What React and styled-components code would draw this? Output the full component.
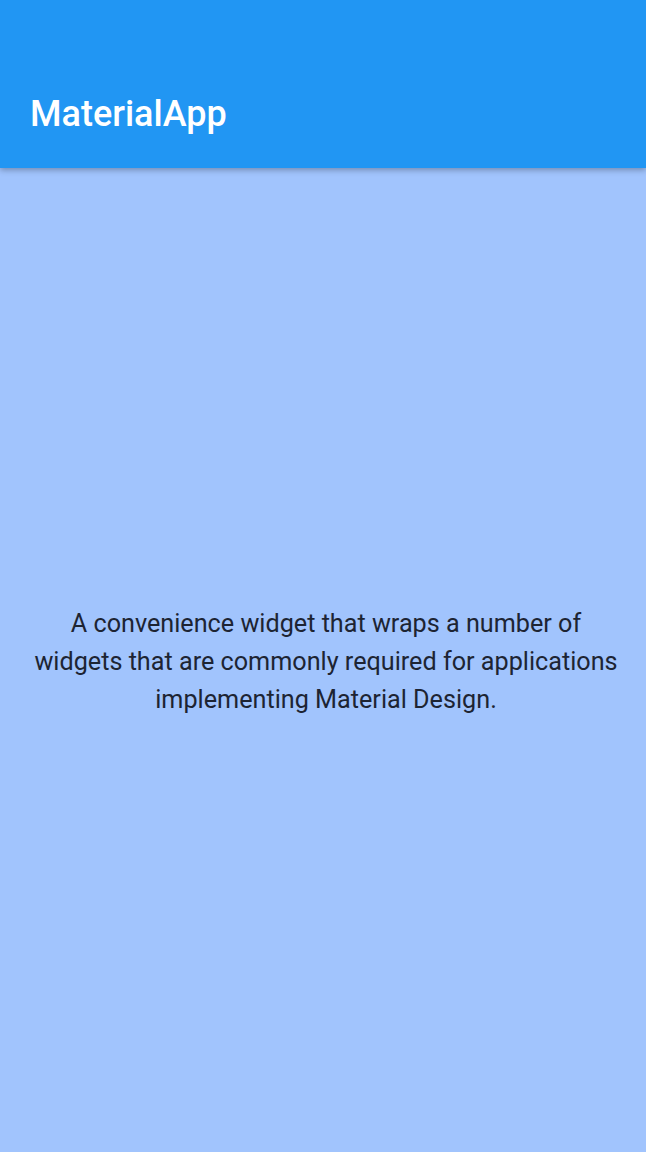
import React from 'react'
import styled, { createGlobalStyle } from 'styled-components'

const GlobalStyle = createGlobalStyle`
  html, body {
    margin: 0;
    padding: 0;
    height: 100%;
  }
  body {
    font-family: Roboto, 'Noto Sans', sans-serif;
    background: #a1c4fd;
  }
  #root {
    height: 100%;
  }
`

const Page = styled.div`
  display: flex;
  flex-direction: column;
  height: 100vh;
  background: #a1c4fd;
`

const AppBar = styled.header`
  height: 168px;
  flex-shrink: 0;
  background: #2196f3;
  display: flex;
  align-items: flex-end;
  padding: 0 30px 34px;
  box-sizing: border-box;
  box-shadow: 0 2px 6px rgba(0, 0, 0, 0.3);
  position: relative;
  z-index: 1;
`

const Title = styled.h1`
  margin: 0;
  color: #fff;
  font-size: 36px;
  font-weight: 500;
  line-height: 40px;
`

const Body = styled.main`
  flex: 1;
  display: flex;
  align-items: center;
  justify-content: center;
  padding: 4px 24px 0 30px;
`

const Description = styled.p`
  margin: 0;
  text-align: center;
  color: #1d2433;
  font-size: 25.2px;
  line-height: 38px;
`

export default function App() {
  return (
    <Page>
      <GlobalStyle />
      <AppBar>
        <Title>MaterialApp</Title>
      </AppBar>
      <Body>
        <Description>
          A convenience widget that wraps a number of widgets that are commonly
          required for applications implementing Material Design.
        </Description>
      </Body>
    </Page>
  )
}
